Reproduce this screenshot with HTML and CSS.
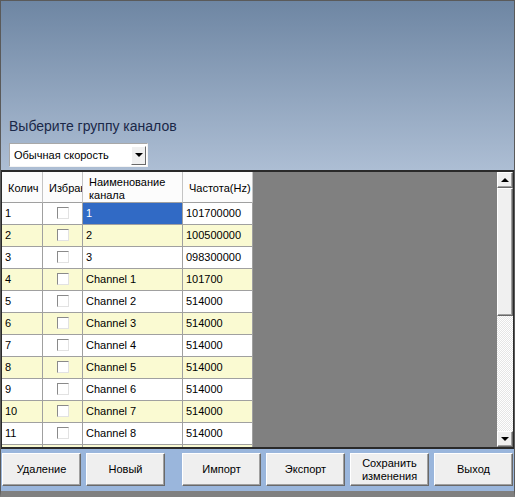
FILE: index.html
```html
<!DOCTYPE html>
<html lang="ru">
<head>
    <meta charset="UTF-8">
    <title>Каналы</title>
    <link rel="stylesheet" href="styles.css">
</head>
<body>
<div class="window">
    <div class="top">
        <div class="group-label">Выберите группу каналов</div>
        <div class="combo">
            <span class="combo-text">Обычная скорость</span>
            <span class="combo-btn"><span class="arrow-down"></span></span>
        </div>
    </div>

    <div class="grid">
        <div class="grid-body">
            <div class="row header">
                <div class="cell">Колич</div>
                <div class="cell">Избрано</div>
                <div class="cell wrap">Наименование канала</div>
                <div class="cell">Частота(Hz)</div>
            </div>
            <div class="row">
                <div class="cell">1</div>
                <div class="cell"><span class="check"></span></div>
                <div class="cell selected">1</div>
                <div class="cell">101700000</div>
            </div>
            <div class="row alt">
                <div class="cell">2</div>
                <div class="cell"><span class="check"></span></div>
                <div class="cell">2</div>
                <div class="cell">100500000</div>
            </div>
            <div class="row">
                <div class="cell">3</div>
                <div class="cell"><span class="check"></span></div>
                <div class="cell">3</div>
                <div class="cell">098300000</div>
            </div>
            <div class="row alt">
                <div class="cell">4</div>
                <div class="cell"><span class="check"></span></div>
                <div class="cell">Channel 1</div>
                <div class="cell">101700</div>
            </div>
            <div class="row">
                <div class="cell">5</div>
                <div class="cell"><span class="check"></span></div>
                <div class="cell">Channel 2</div>
                <div class="cell">514000</div>
            </div>
            <div class="row alt">
                <div class="cell">6</div>
                <div class="cell"><span class="check"></span></div>
                <div class="cell">Channel 3</div>
                <div class="cell">514000</div>
            </div>
            <div class="row">
                <div class="cell">7</div>
                <div class="cell"><span class="check"></span></div>
                <div class="cell">Channel 4</div>
                <div class="cell">514000</div>
            </div>
            <div class="row alt">
                <div class="cell">8</div>
                <div class="cell"><span class="check"></span></div>
                <div class="cell">Channel 5</div>
                <div class="cell">514000</div>
            </div>
            <div class="row">
                <div class="cell">9</div>
                <div class="cell"><span class="check"></span></div>
                <div class="cell">Channel 6</div>
                <div class="cell">514000</div>
            </div>
            <div class="row alt">
                <div class="cell">10</div>
                <div class="cell"><span class="check"></span></div>
                <div class="cell">Channel 7</div>
                <div class="cell">514000</div>
            </div>
            <div class="row">
                <div class="cell">11</div>
                <div class="cell"><span class="check"></span></div>
                <div class="cell">Channel 8</div>
                <div class="cell">514000</div>
            </div>
            <div class="row alt">
                <div class="cell">12</div>
                <div class="cell"><span class="check"></span></div>
                <div class="cell">Channel 9</div>
                <div class="cell">514000</div>
            </div>
        </div>
        <div class="scrollbar">
            <div class="sb-btn"><span class="arrow-up"></span></div>
            <div class="sb-thumb"></div>
            <div class="sb-track"></div>
            <div class="sb-btn"><span class="arrow-down"></span></div>
        </div>
    </div>

    <div class="buttons">
        <button class="btn">Удаление</button>
        <button class="btn">Новый</button>
        <button class="btn btn-gap">Импорт</button>
        <button class="btn">Экспорт</button>
        <button class="btn">Сохранить<br>изменения</button>
        <button class="btn">Выход</button>
    </div>
</div>
</body>
</html>
```

FILE: styles.css
```css
body {
    margin: 0;
    font-family: "Liberation Sans", Arial, sans-serif;
    font-size: 11px;
}
.window {
    width: 515px;
    height: 497px;
    box-sizing: border-box;
    border: 1px solid #5a5a5a;
    border-bottom: 6px solid #808080;
    display: flex;
    flex-direction: column;
    background: #9ab6dc;
}
.top {
    height: 169px;
    flex: none;
    display: flex;
    flex-direction: column;
    justify-content: flex-end;
    padding: 0 0 3px 8px;
    box-sizing: border-box;
    background: linear-gradient(#6e86a3, #adbed4);
}
.group-label {
    font-size: 14px;
    line-height: 16px;
    color: #1a2848;
    margin-bottom: 9px;
}
.combo {
    width: 139px;
    height: 24px;
    box-sizing: border-box;
    background: #fff;
    border: 1px solid;
    border-color: #a8a8a8 #f4f4f4 #f4f4f4 #a8a8a8;
    display: flex;
    align-items: center;
    justify-content: space-between;
    padding: 0 1px 0 4px;
}
.combo-btn {
    width: 15px;
    height: 19px;
    box-sizing: border-box;
    background: #f0f0f0;
    border: 1px solid;
    border-color: #fff #696969 #696969 #fff;
    display: flex;
    align-items: center;
    justify-content: center;
}
.arrow-down {
    width: 0;
    height: 0;
    border-left: 4px solid transparent;
    border-right: 4px solid transparent;
    border-top: 4px solid #000;
}
.arrow-up {
    width: 0;
    height: 0;
    border-left: 4px solid transparent;
    border-right: 4px solid transparent;
    border-bottom: 4px solid #000;
}

.grid {
    height: 279px;
    flex: none;
    box-sizing: border-box;
    border: 1px solid #2a2a2a;
    border-top-width: 2px;
    border-bottom-width: 2px;
    display: flex;
}
.grid-body {
    flex: 1;
    background: #808080;
    overflow: hidden;
}
.row {
    display: grid;
    grid-template-columns: 41px 40px 100px 70px;
    width: max-content;
    background: #fff;
}
.row.alt {
    background: #fafad2;
}
.cell {
    box-sizing: border-box;
    height: 22px;
    line-height: 21px;
    padding: 0 3px;
    border-right: 1px solid #a0a0a0;
    border-bottom: 1px solid #a0a0a0;
    white-space: nowrap;
    overflow: hidden;
}
.cell.selected {
    background: #316ac5;
    color: #fff;
}
.header .cell {
    height: 31px;
    line-height: 13px;
    padding: 3px 2px 0 6px;
    display: flex;
    align-items: center;
    background: #fcfcfc;
    border-right-color: #c4c4c4;
}
.header .cell.wrap {
    white-space: normal;
}
.check {
    display: block;
    width: 12px;
    height: 12px;
    margin: 4px auto 0;
    box-sizing: border-box;
    background: #fff;
    border: 1px solid;
    border-color: #8a8a8a #e2e2e2 #e2e2e2 #8a8a8a;
}

.scrollbar {
    width: 16px;
    flex: none;
    display: flex;
    flex-direction: column;
}
.sb-btn, .sb-thumb {
    box-sizing: border-box;
    background: #f0f0f0;
    border: 1px solid;
    border-color: #fff #696969 #696969 #fff;
    box-shadow: inset -1px -1px #a0a0a0;
}
.sb-btn {
    height: 16px;
    display: flex;
    align-items: center;
    justify-content: center;
}
.sb-thumb {
    height: 128px;
}
.sb-track {
    flex: 1;
    background: repeating-conic-gradient(#fff 0 25%, #e6e6e6 0 50%) 0 0 / 2px 2px;
}

.buttons {
    flex: 1;
    display: flex;
    align-items: flex-start;
    gap: 5px;
    padding: 4px 0 0 1px;
}
.btn {
    width: 79px;
    height: 33px;
    font-family: "Liberation Sans", Arial, sans-serif;
    font-size: 11px;
    line-height: 13px;
    color: #000;
    background: #efefef;
    border: 1px solid;
    border-color: #fff #696969 #696969 #fff;
    box-shadow: inset -1px -1px #a0a0a0;
    padding: 0;
}
.btn-gap {
    margin-left: 12px;
}
```
